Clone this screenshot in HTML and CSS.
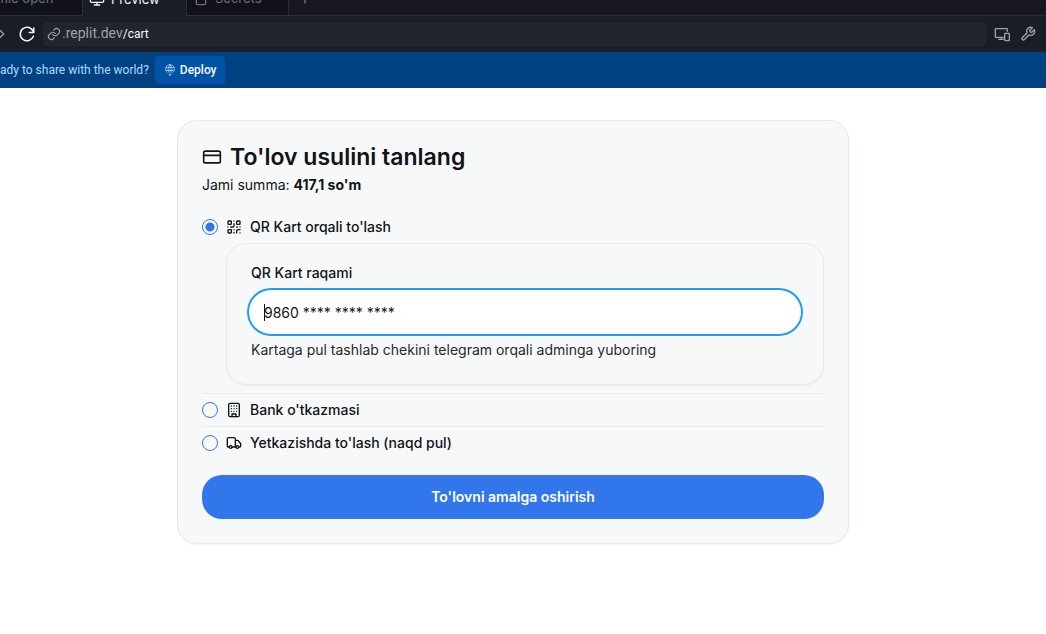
FILE: index.html
```
<!DOCTYPE html>
<html lang="uz">
<head>
<meta charset="utf-8">
<meta name="viewport" content="width=device-width, initial-scale=1">
<title>To'lov</title>
<link rel="stylesheet" href="styles.css">
</head>
<body>
<header class="workspace">
  <nav class="tabs">
    <a class="tab tab-file" href="#file">file open</a>
    <a class="tab tab-preview active" href="#preview">
      <svg class="icon" width="16" height="16" viewBox="0 0 24 24"><rect x="2" y="3" width="20" height="14" rx="2"/><path d="M8 21h8M12 17v4"/></svg>Preview</a>
    <a class="tab tab-secrets" href="#secrets">
      <svg class="icon" width="16" height="16" viewBox="0 0 24 24"><rect x="5" y="4" width="14" height="18" rx="2"/></svg>Secrets</a>
    <button class="tab-add" type="button" aria-label="New tab"><svg class="icon" width="14" height="14" viewBox="0 0 24 24"><path d="M12 5v14M5 12h14"/></svg></button>
  </nav>
  <div class="toolbar">
    <button class="tool forward" type="button" aria-label="Forward"><svg class="icon" width="16" height="16" viewBox="0 0 24 24"><path d="M2 9h12V4l8 8-8 8v-5H2"/></svg></button>
    <button class="tool reload" type="button" aria-label="Reload"><svg class="icon" width="18" height="18" viewBox="0 0 24 24"><path d="M21 4v6h-6"/><path d="M20.500 9A9 9 0 1 0 20.500 15"/></svg></button>
    <a class="address" href="#cart">
      <svg class="icon" width="14" height="14" viewBox="0 0 24 24"><path d="M10 13a5 5 0 0 0 7.500.5l3-3a5 5 0 0 0-7-7l-1.700 1.700"/><path d="M14 11a5 5 0 0 0-7.500-.5l-3 3a5 5 0 0 0 7 7l1.700-1.700"/></svg>
      <span>.replit.dev<span class="path">/cart</span></span>
    </a>
    <button class="tool devices" type="button" aria-label="Devices"><svg class="icon" width="16" height="16" viewBox="0 0 24 24"><path d="M20 8V5a1 1 0 0 0-1-1H3a1 1 0 0 0-1 1v11a1 1 0 0 0 1 1h11M7 20h7M11 17v3"/><rect x="16" y="11" width="7" height="11" rx="1"/></svg></button>
    <button class="tool" type="button" aria-label="Tools"><svg class="icon" width="16" height="16" viewBox="0 0 24 24"><path d="M14.700 6.300a1 1 0 0 0 0 1.400l1.600 1.600a1 1 0 0 0 1.400 0l3.770-3.770a6 6 0 0 1-7.940 7.940l-6.910 6.910a2.120 2.120 0 0 1-3-3l6.910-6.910a6 6 0 0 1 7.940-7.940l-3.760 3.760z"/></svg></button>
  </div>
  <div class="banner">
    <span>ady to share with the world?</span>
    <button class="deploy" type="button"><svg class="icon" width="12" height="12" viewBox="0 0 24 24"><path d="M6 17a9 9 0 1 1 12 0M4 7h16M4 13h16M12 1v22M9 20l3 3 3-3M9 16C7 11 8 5 12 1c4 4 5 10 3 15"/></svg>Deploy</button>
  </div>
</header>
<main class="page">
  <form class="card">
    <h1 class="title"><svg class="icon" width="20" height="20" viewBox="0 0 24 24"><rect x="2" y="5" width="20" height="14" rx="2"/><path d="M2 10h20"/></svg>To'lov usulini tanlang</h1>
    <p class="total">Jami summa: <strong>417,1 so'm</strong></p>
    <div class="options">
      <div class="option">
        <input class="radio" type="radio" name="method" id="qr" checked>
        <label class="method" for="qr"><svg class="icon" width="16" height="16" viewBox="0 0 24 24"><rect x="3" y="3" width="5" height="5" rx="1"/><rect x="16" y="3" width="5" height="5" rx="1"/><rect x="3" y="16" width="5" height="5" rx="1"/><path d="M21 16h-3a2 2 0 0 0-2 2v3M21 21v.01M12 7v3a2 2 0 0 1-2 2H7M3 12h.01M12 3h.01M12 16v.01M16 12h1M21 12v.01M12 21v-1"/></svg>QR Kart orqali to'lash</label>
      </div>
      <section class="panel">
        <label class="field-label" for="card-number">QR Kart raqami</label>
        <div class="field">
          <input class="input" id="card-number" type="text" value="9860 **** **** ****">
          <span class="caret"></span>
        </div>
        <p class="hint">Kartaga pul tashlab chekini telegram orqali adminga yuboring</p>
      </section>
      <div class="option divided">
        <input class="radio" type="radio" name="method" id="bank">
        <label class="method" for="bank"><svg class="icon" width="16" height="16" viewBox="0 0 24 24"><rect x="4" y="2" width="16" height="20" rx="2"/><path d="M9 22v-4h6v4M8 6h.01M16 6h.01M12 6h.01M12 10h.01M12 14h.01M16 10h.01M16 14h.01M8 10h.01M8 14h.01"/></svg>Bank o'tkazmasi</label>
      </div>
      <div class="option divided">
        <input class="radio" type="radio" name="method" id="cash">
        <label class="method" for="cash"><svg class="icon" width="16" height="16" viewBox="0 0 24 24"><path d="M14 18V6a2 2 0 0 0-2-2H4a2 2 0 0 0-2 2v11a1 1 0 0 0 1 1h2M15 18H9M19 18h2a1 1 0 0 0 1-1v-3.650a1 1 0 0 0-.22-.62l-3.480-4.350A1 1 0 0 0 17.520 8H14"/><circle cx="17" cy="18" r="2"/><circle cx="7" cy="18" r="2"/></svg>Yetkazishda to'lash (naqd pul)</label>
      </div>
    </div>
    <button class="submit" type="button">To'lovni amalga oshirish</button>
  </form>
</main>
</body>
</html>
```
FILE: styles.css
```
* { box-sizing: border-box; }
body { margin: 0; background: #fff; color: #0f1419; font: 14px/20px Inter, sans-serif; }
h1, p { margin: 0; }
a { color: inherit; text-decoration: none; }
button { margin: 0; padding: 0; border: 0; background: none; color: inherit; font: inherit; }
.icon { flex: none; fill: none; stroke: currentColor; stroke-width: 2; stroke-linecap: round; stroke-linejoin: round; }

.workspace { overflow: hidden; background: #1b1d26; color: #c2c8cc; font: 14px/16px Roboto, sans-serif; }
.tabs { display: flex; align-items: flex-end; height: 16px; background: #171720; border-bottom: 1px solid #2b2d37; font: 13px/16px Inter, sans-serif; }
.tab { display: flex; align-items: center; gap: 6px; height: 32px; padding: 0 6px 2px; border-right: 1px solid #2b2d37; background: #11111a; color: #6b7078; }
.tab-file { width: 83px; padding-left: 0; }
.tab-preview { width: 104px; }
.tab-secrets { width: 102px; }
.tab.active { margin-bottom: -1px; background: #1b1d26; color: #f5f9fc; }
.tab-add { display: flex; align-items: center; height: 32px; padding: 0 9px; color: #858990; }
.toolbar { display: flex; align-items: center; height: 36px; padding-right: 10px; border-bottom: 1px solid #22242c; }
.tool { display: flex; color: #9da2a6; }
.forward { margin-left: -11px; }
.reload { margin: 0 7px 0 13px; color: #f5f9fc; }
.address { flex: 1; display: flex; align-items: center; gap: 1px; height: 24px; padding: 0 4px; border-radius: 4px; background: #23252e; color: #9da2a6; }
.path { color: #f5f9fc; font-size: 12px; }
.devices { margin: 0 10px 0 8px; }
.banner { display: flex; align-items: center; gap: 6px; height: 36px; background: #004182; color: #b3d9ff; font-size: 12px; }
.deploy { display: flex; align-items: center; gap: 4px; height: 28px; padding: 0 9px; border-radius: 4px; background: #0053a6; color: #f5f9fc; font-weight: 500; }
.deploy .icon { stroke-width: 1; }

.page { padding: 32px 36px 32px 16px; }
.card { max-width: 672px; margin: 0 auto; padding: 24px; border: 1px solid #e1eaef; border-radius: 20px; background: #f7f9f9; box-shadow: 0 1px 2px #0000000d; }
.title { display: flex; align-items: center; gap: 8px; font-size: 23px; line-height: 24px; font-weight: 600; }
.total { margin: 6px 0 24px; }
.total strong { font-weight: 700; }
.options { display: flex; flex-direction: column; gap: 8px; }
.option { display: flex; align-items: center; gap: 8px; }
.divided { padding-top: 8px; border-top: 1px solid #e1eaef; }
.radio { appearance: none; flex: none; width: 16px; height: 16px; margin: 0; border: 1px solid #3276ec; border-radius: 50%; background: transparent; }
.radio:checked { background: radial-gradient(circle, #3276ec 4px, transparent 5px); }
.method { flex: 1; display: flex; align-items: center; gap: 8px; line-height: 16px; font-weight: 500; }
.panel { margin-left: 24px; padding: 20px 24px 24px; border: 1px solid #e1eaef; border-radius: 20px; box-shadow: 0 1px 2px #0000000d; }
.field-label { display: block; margin-bottom: 10px; line-height: 18px; font-weight: 500; }
.field { position: relative; margin-bottom: 8px; }
.input { display: block; width: 100%; height: 40px; padding: 0 12px; border: 1px solid #f7f9fa; border-radius: 20px; outline: 0; background: #fff; color: inherit; font: inherit; box-shadow: 0 0 0 2px #fff, 0 0 0 4px #1e9df1; }
.caret { position: absolute; top: 12px; left: 13px; width: 1px; height: 17px; background: #0f1419; }
.hint { color: #26292e; }
.submit { display: block; width: 100%; height: 44px; margin-top: 24px; border-radius: 20px; background: #3276ec; color: #fff; font-weight: 600; text-align: center; }
```
